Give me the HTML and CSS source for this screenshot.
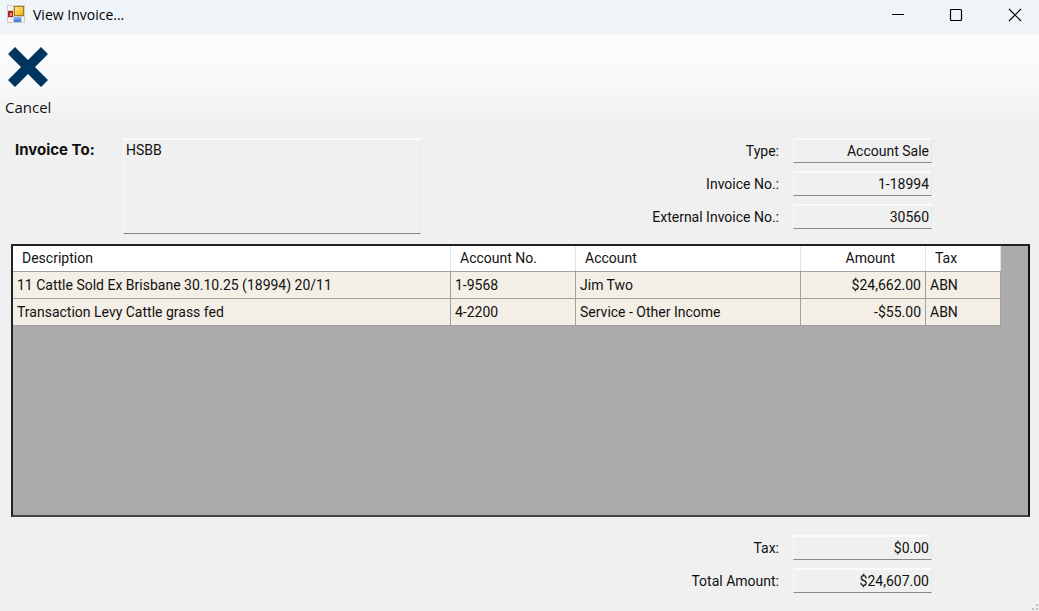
FILE: index.html
```html
<!DOCTYPE html>
<html lang="en">
	<head>
		<meta charset="UTF-8"/>
		<title>View Invoice...</title>
		<link rel="stylesheet" href="styles.css">
	</head>
	<body>
		<header class="titlebar">
			<svg class="app-icon" width="18" height="18" viewBox="0 0 18 18">
				<defs>
					<linearGradient id="gold" x1="0" y1="0" x2="1" y2="1">
						<stop offset="0" stop-color="#ffeb9c"/>
						<stop offset="1" stop-color="#eeb000"/>
					</linearGradient>
					<linearGradient id="blue" x1="0" y1="0" x2="0" y2="1">
						<stop offset="0" stop-color="#8dbcff"/>
						<stop offset="1" stop-color="#3272d8"/>
					</linearGradient>
				</defs>
				<rect x="0" y="0" width="18" height="18" fill="#cfcdca"/>
				<path d="M1 1h5v4H1zM1 13h5v4H1zM15 12h2v5h-2z" fill="#f3f3f3"/>
				<rect x="1" y="6" width="5" height="6" fill="#b5261c"/>
				<rect x="3" y="8" width="2" height="3" fill="#ee8e80"/>
				<rect x="7" y="1" width="10" height="10" fill="#a87b16"/>
				<rect x="8" y="2" width="8" height="8" fill="url(#gold)"/>
				<rect x="7" y="12" width="7" height="5" fill="url(#blue)"/>
			</svg>
			<span class="title">View Invoice...</span>
			<div class="window-buttons">
				<button type="button" aria-label="Minimize">
					<svg width="14" height="14" viewBox="0 0 14 14"><path d="M1 6.5h12" stroke="#000" fill="none"/></svg>
				</button>
				<button type="button" aria-label="Maximize">
					<svg width="14" height="14" viewBox="0 0 14 14"><rect x="1.5" y="1.5" width="11" height="11" rx="1" stroke="#000" stroke-width="1.2" fill="none"/></svg>
				</button>
				<button type="button" aria-label="Close">
					<svg width="14" height="14" viewBox="0 0 14 14"><path d="M1 1l12 12M13 1L1 13" stroke="#000" stroke-width="1.2" fill="none"/></svg>
				</button>
			</div>
		</header>
		<div class="toolbar">
			<button type="button" class="tool">
				<svg width="40" height="40" viewBox="0 0 40 40"><path d="M7 0L20 13L33 0L40 7L27 20L40 33L33 40L20 27L7 40L0 33L13 20L0 7Z" fill="#00355f"/></svg>
				<span>Cancel</span>
			</button>
		</div>
		<main>
			<section class="invoice-head">
				<label class="to-label" for="invoice-to">Invoice To:</label>
				<textarea class="field address" id="invoice-to" readonly>HSBB</textarea>
				<div class="fields">
					<label for="type">Type:</label>
					<input class="field" id="type" value="Account Sale" readonly>
					<label for="invoice-no">Invoice No.:</label>
					<input class="field" id="invoice-no" value="1-18994" readonly>
					<label for="external-no">External Invoice No.:</label>
					<input class="field" id="external-no" value="30560" readonly>
				</div>
			</section>
			<div class="grid">
				<table>
					<thead>
						<tr>
							<th>Description</th>
							<th class="code">Account No.</th>
							<th class="account">Account</th>
							<th class="amount">Amount</th>
							<th class="tax">Tax</th>
						</tr>
					</thead>
					<tbody>
						<tr>
							<td>11 Cattle Sold Ex Brisbane 30.10.25 (18994) 20/11</td>
							<td>1-9568</td>
							<td>Jim Two</td>
							<td class="amount">$24,662.00</td>
							<td>ABN</td>
						</tr>
						<tr>
							<td>Transaction Levy Cattle grass fed</td>
							<td>4-2200</td>
							<td>Service - Other Income</td>
							<td class="amount">-$55.00</td>
							<td>ABN</td>
						</tr>
					</tbody>
				</table>
			</div>
			<section class="fields totals">
				<label for="tax">Tax:</label>
				<input class="field" id="tax" value="$0.00" readonly>
				<label for="total">Total Amount:</label>
				<input class="field" id="total" value="$24,607.00" readonly>
			</section>
		</main>
		<svg class="grip" width="8" height="8" viewBox="0 0 8 8"><path d="M5 1h2v2H5zM1 5h2v2H1zM5 5h2v2H5z" fill="#bdbdbd"/></svg>
	</body>
</html>
```
FILE: styles.css
```css
* {
	box-sizing: border-box;
}
body {
	display: flex;
	flex-direction: column;
	min-height: 100vh;
	margin: 0;
	background: #f0f0f0;
	color: #111;
	font: 14px/16px Roboto, "Liberation Sans", sans-serif;
}
button {
	padding: 0;
	border: 0;
	background: none;
	color: inherit;
}
.titlebar {
	display: flex;
	align-items: center;
	height: 34px;
	padding-left: 7px;
	background: #eff4f9;
	font: 14px/20px "Open Sans", "Noto Sans", sans-serif;
	color: #000;
}
.app-icon {
	margin: 0 8px 6px 0;
}
.title {
	padding-bottom: 4px;
}
.window-buttons {
	display: flex;
	align-self: flex-start;
	height: 30px;
	margin-left: auto;
}
.window-buttons button {
	display: flex;
	align-items: center;
	justify-content: center;
	width: 58px;
}
.window-buttons button:last-child {
	width: 48px;
	margin-left: 6px;
}
.window-buttons button:hover {
	background: #dfe4ea;
}
.toolbar {
	height: 90px;
	padding: 13px 5px 0;
	background: linear-gradient(#fcfcfc, #f8f8f8 60%, #f0f0f0);
}
.tool {
	display: flex;
	flex-direction: column;
	align-items: center;
	gap: 10px;
	font: 15px/20px "Open Sans", "Noto Sans", sans-serif;
}
main {
	display: flex;
	flex: 1;
	flex-direction: column;
	padding: 14px 9px 18px 11px;
}
.invoice-head {
	display: flex;
	align-items: flex-start;
	height: 106px;
	padding-left: 4px;
}
.to-label {
	width: 108px;
	padding-top: 4px;
	font-family: Inter, sans-serif;
	font-size: 15px;
	font-weight: bold;
}
.field {
	height: 25px;
	margin: 0;
	padding: 0 2px;
	border: 1px solid #e8e8e8;
	border-top: 2px solid #fafafa;
	border-left-color: #fafafa;
	border-bottom: 1px solid #888;
	outline: 0;
	background: #f0f0f0;
	color: inherit;
	font: inherit;
	text-align: right;
}
.field.address {
	width: 298px;
	height: 96px;
	padding-top: 2px;
	resize: none;
	text-align: left;
}
.fields {
	display: grid;
	grid-template-columns: auto 139px;
	align-items: center;
	justify-content: end;
	gap: 8px 14px;
	margin-left: auto;
	padding-right: 98px;
}
.fields label {
	text-align: right;
}
.grid {
	flex: 1;
	border: 2px solid #222;
	border-color: #222 #111 #444 #222;
	background: #ababab;
}
table {
	width: calc(100% - 27px);
	border-collapse: collapse;
	table-layout: fixed;
	background: #f3eee6;
}
th, td {
	height: 27px;
	padding: 0 4px;
	border: 1px solid #a0a0a0;
	border-left: 0;
	text-align: left;
	font-weight: normal;
}
th {
	height: 25px;
	padding: 0 9px;
	border-top: 0;
	border-right-color: #e3e3e3;
	background: #fff;
}
.code {
	width: 125px;
}
.account {
	width: 225px;
}
.amount {
	width: 125px;
	text-align: right;
}
th.amount {
	padding-right: 30px;
}
.tax {
	width: 75px;
}
.totals {
	padding-top: 18px;
}
.grip {
	position: absolute;
	right: 0;
	bottom: 0;
}
```
